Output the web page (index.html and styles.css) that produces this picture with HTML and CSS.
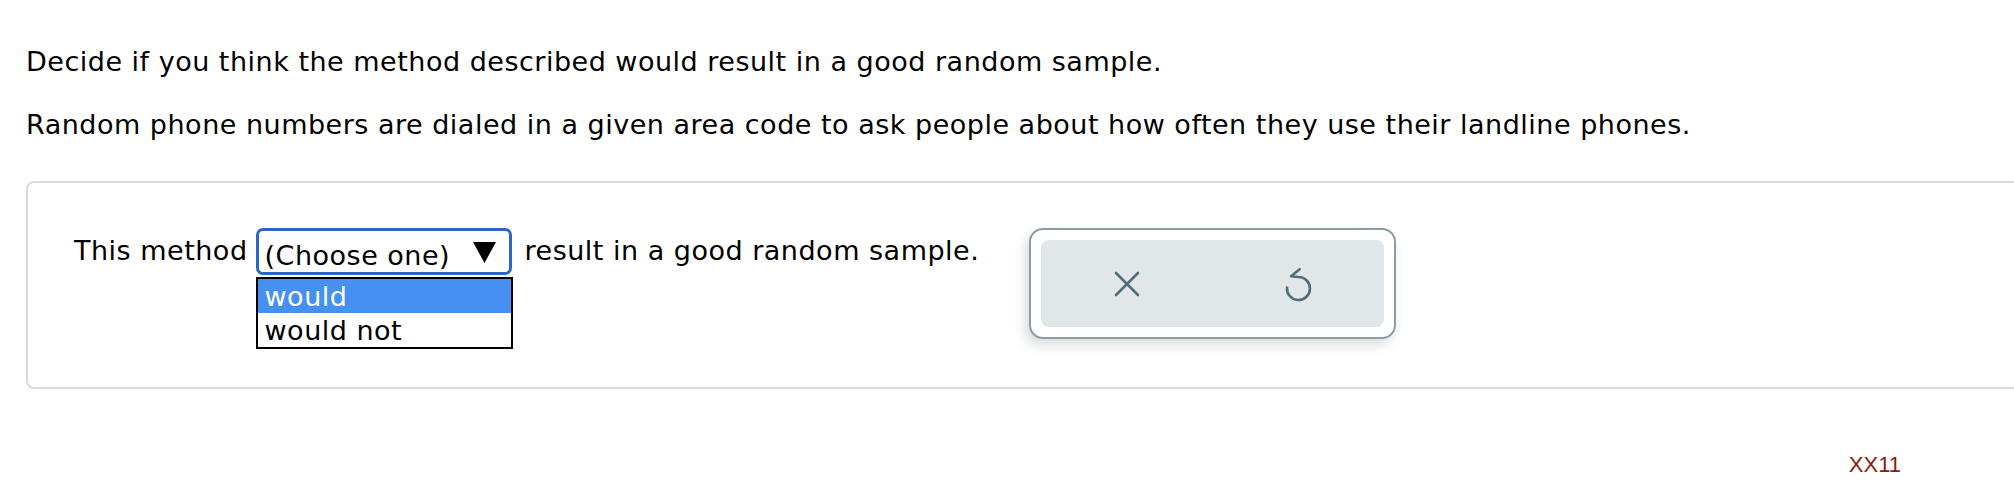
FILE: index.html
```html
<!DOCTYPE html>
<html lang="en">
<head>
<meta charset="utf-8">
<title>Random sample question</title>
<link rel="stylesheet" href="styles.css">
</head>
<body>
<div class="page">
  <p class="q">Decide if you think the method described would result in a good random sample.</p>
  <p class="q">Random phone numbers are dialed in a given area code to ask people about how often they use their landline phones.</p>
  <div class="card">
    <div class="row">
      <span class="txt">This method</span>
      <div class="sel-wrap">
        <div class="sel">
          <span>(Choose one)</span>
          <svg class="caret" width="23" height="21" viewBox="0 0 23 21"><polygon points="0,0 23,0 11.5,21" fill="#000"/></svg>
        </div>
        <ul class="opts">
          <li class="hl">would</li>
          <li>would not</li>
        </ul>
      </div>
      <span class="txt after">result in a good random sample.</span>
      <div class="tools">
        <div class="tools-inner">
          <button class="tb" type="button" aria-label="Clear">
            <svg width="26" height="26" viewBox="0 0 26 26"><path d="M2 2 L24 24 M24 2 L2 24" stroke="#4f6e78" stroke-width="2.6" stroke-linecap="round" fill="none"/></svg>
          </button>
          <button class="tb" type="button" aria-label="Undo">
            <svg width="30" height="36" viewBox="0 0 30 36"><path d="M15.7 3.2 L7 10.3 L14.5 11 A11.5 11.5 0 1 1 3 21.5" stroke="#4f6e78" stroke-width="2.6" stroke-linecap="round" stroke-linejoin="round" fill="none"/></svg>
          </button>
        </div>
      </div>
    </div>
  </div>
  <div class="footer"><span class="code">XX11</span></div>
</div>
</body>
</html>
```
FILE: styles.css
```css
body {
  margin: 0;
  font-family: "DejaVu Sans", Verdana, sans-serif;
  font-size: 27px;
  letter-spacing: 0.5px;
  color: #000;
  background: #fff;
  overflow: hidden;
}

.page {
  padding: 46px 0 0 26px;
}

.q {
  margin: 0;
  line-height: 32px;
}

.q + .q {
  margin-top: 31px;
}

.card {
  margin-top: 40px;
  margin-right: -60px;
  border: 2px solid #d6dce0;
  border-radius: 8px;
  padding: 45px 0 48px 46px;
}

.row {
  display: flex;
  align-items: flex-start;
}

.txt {
  line-height: 32px;
  margin-top: 7px;
  white-space: nowrap;
}

.sel-wrap {
  position: relative;
  margin-left: 8px;
}

.sel {
  box-sizing: border-box;
  width: 256px;
  height: 47px;
  border: 3px solid #2a66c9;
  border-radius: 7px;
  padding: 9px 13px 0 6px;
  display: flex;
  align-items: flex-start;
  justify-content: space-between;
  line-height: 32px;
  white-space: nowrap;
}

.caret {
  margin-top: 2px;
  flex: none;
}

.opts {
  position: absolute;
  top: 49px;
  left: 0;
  box-sizing: border-box;
  width: 257px;
  margin: 0;
  padding: 0;
  list-style: none;
  border: 2px solid #000;
  background: #fff;
}

.opts li {
  height: 34px;
  box-sizing: border-box;
  padding: 2px 0 0 7px;
  line-height: 32px;
  white-space: nowrap;
}

.opts li.hl {
  background: #4590f1;
  color: #fff;
}

.after {
  margin-left: 13px;
}

.tools {
  box-sizing: border-box;
  width: 367px;
  height: 111px;
  margin-left: 50px;
  border: 2px solid #8b9da5;
  border-radius: 14px;
  padding: 10px;
  background: #fff;
  box-shadow: -4px 6px 12px rgba(40, 60, 70, 0.18);
}

.tools-inner {
  display: flex;
  height: 100%;
  background: #e1e6e9;
  border-radius: 8px;
}

.tb {
  flex: 1;
  display: flex;
  align-items: center;
  justify-content: center;
  background: none;
  border: 0;
  padding: 0;
}

.footer {
  margin-top: 58px;
  padding-right: 113px;
  text-align: right;
}

.code {
  font-family: "Liberation Sans", Arial, sans-serif;
  font-size: 22px;
  line-height: 26px;
  letter-spacing: 0;
  color: #8a1c0c;
}
```
